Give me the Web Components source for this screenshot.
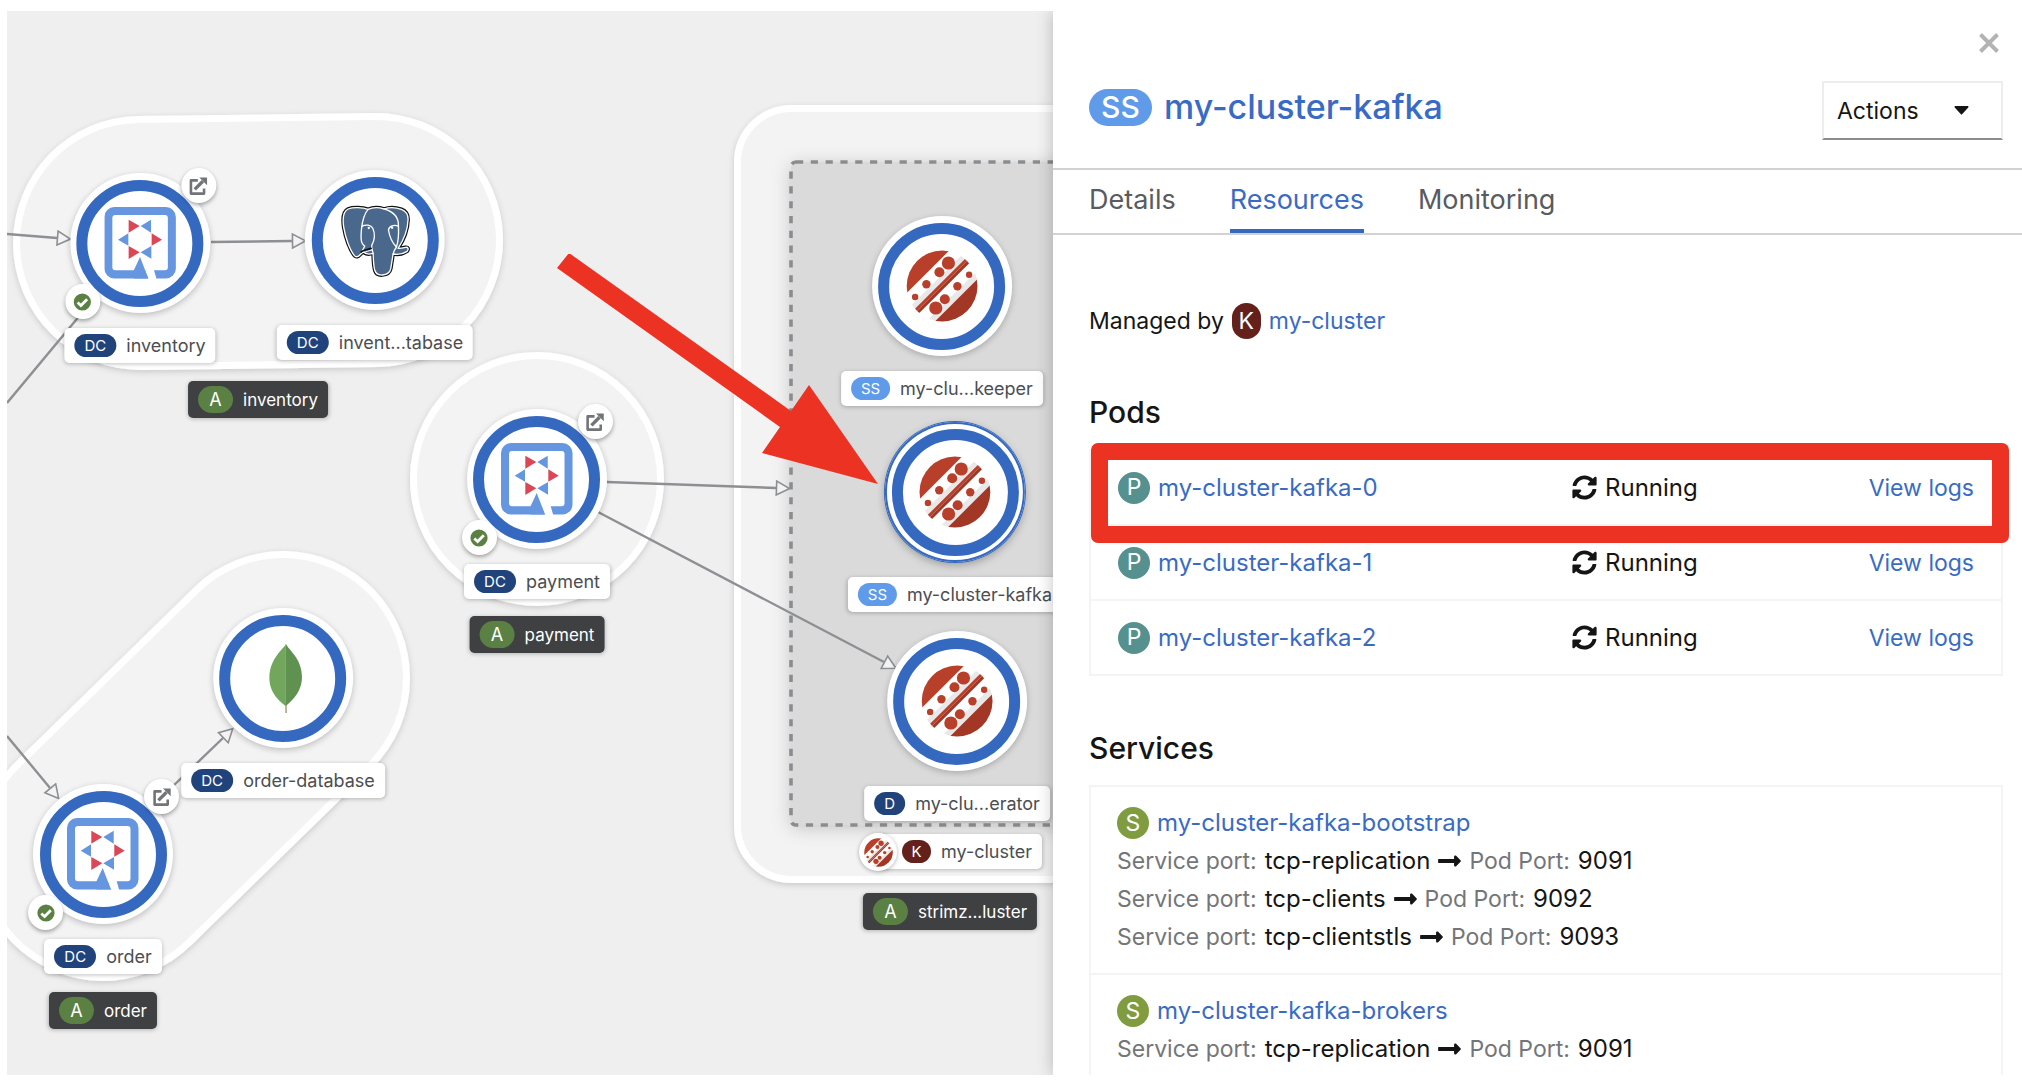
<!DOCTYPE html>
<html lang="en">
<head>
<meta charset="utf-8">
<meta name="viewport" content="width=device-width, initial-scale=1">
<title>my-cluster-kafka</title>
<style>
  html, body { margin: 0; height: 100%; }
  body { font-family: Inter, "Open Sans", sans-serif; font-size: 23px; color: #151515; background: #fff; }
</style>
</head>
<body>
<console-page></console-page>
<script>
const define = (name, html, setup) => {
  const template = document.createElement('template');
  template.innerHTML = '<style>*{box-sizing:border-box}a{color:#3a6bc4;text-decoration:none}svg{display:block;flex:none}</style>' + html;
  customElements.define(name, class extends HTMLElement {
    connectedCallback() {
      if (this.shadowRoot) return;
      const root = this.attachShadow({ mode: 'open' });
      root.append(template.content.cloneNode(true));
      if (setup) setup(this, root);
    }
  });
};

/* Artwork, drawn around a 72 x 72 box */
const ART = {
  quarkus: `<svg viewBox="0 0 72 72" width="72" height="72">
    <rect width="71.5" height="71.5" rx="10" fill="#6596df"/><rect x="8" y="8" width="55.5" height="55.3" rx="3" fill="#fff"/>
    <path d="M35.7 50 44 72H52.2L49.6 63V50Z" fill="#fff"/><path d="M35.7 50 29.5 63.3V71.5H44Z" fill="#6596df"/>
    <path fill="#db4756" d="M24.3 12.7V25.7L35.3 19ZM47.3 26.3V38.7L57.7 32.7ZM24.3 39V52L35.3 45.3Z"/>
    <path fill="#6596df" d="M46.7 12.7V25.7L36.3 19ZM24 26.3V38.7L13.7 32.7ZM47 39V51.7L36.3 45.3Z"/></svg>`,
  postgres: `<svg viewBox="119 114 216 216" width="72" height="72" overflow="visible" stroke-linejoin="round" stroke-linecap="round">
    <defs><path id="el" d="M207 130C190 124 162 123 147 129C130 137 130 160 134 185C139 215 152 252 166 269C171 275 177 272 183 266L192 257C200 266 212 265 222 262C223 285 223 300 227 313C231 325 240 328 250 327C264 326 272 322 275 308L282 264C298 267 312 264 324 256C330 249 327 243 319 244C311 246 305 248 297 247C314 222 326 190 327 160C327 146 320 135 307 130C290 124 268 124 255 129C240 124 220 124 207 130Z"/></defs>
    <use href="#el" fill="none" stroke="#111" stroke-width="11"/>
    <use href="#el" fill="#49688c" stroke="#fff" stroke-width="4"/>
    <g fill="none" stroke="#fff" stroke-width="4">
      <path d="M207 130C194 144 190 162 187 190C185 215 184 233 197 240L190 254"/>
      <path d="M188 181C200 175 216 176 221 187C229 205 225 225 218 238C216 246 220 252 222 262"/>
      <path d="M255 129C285 137 299 155 298 181C299 205 300 220 292 243"/>
      <path d="M298 181C285 175 270 180 268 192C271 210 281 232 292 243C287 250 283 256 282 264"/></g>
    <path d="M186 258C197 250 204 252 216 247" fill="none" stroke="#111" stroke-width="5"/>
    <path d="M190 260C203 257 209 254 219 252" fill="none" stroke="#fff" stroke-width="3"/>
    <circle cx="209" cy="186" r="3.5" fill="#fff"/><circle cx="279" cy="185" r="3.5" fill="#fff"/></svg>`,
  mongo: `<svg viewBox="-36 -36 72 72" width="72" height="72">
    <path d="M1.9 25H3.6L3.9 35H2Z" fill="#b9ad98"/>
    <path d="M2.7-34.5C3-31-13.8-21-13.8 0C-13.8 15-3 24 2.7 28Z" fill="#71a65c"/>
    <path d="M2.7-34.5C5-28 18.8-20 18.8-1C18.8 15 7 24 2.7 28Z" fill="#5f9150"/></svg>`,
  strimzi: `<svg viewBox="-36 -36 72 72" width="72" height="72">
    <defs><clipPath id="disc"><circle r="35.4"/></clipPath></defs>
    <g clip-path="url(#disc)"><g transform="rotate(-45)">
      <rect x="-36" y="-36" width="72" height="72" fill="#fff"/><rect x="-36" y="-36" width="72" height="16" fill="#b8402a"/>
      <rect x="-36" y="-8" width="72" height="5" fill="#e8e8e8"/><rect x="-36" y="14" width="72" height="6" fill="#e8e8e8"/>
      <rect x="-36" y="-3" width="72" height="3" fill="#b8402a"/><rect x="-36" width="72" height="3" fill="#a23726"/>
      <rect x="-36" y="20" width="72" height="16" fill="#a23726"/></g>
      <g fill="#b8402a"><circle cx="6.3" cy="-23" r="6.6"/><circle cx="-2.7" cy="-13.7" r="5"/><circle cx="-15.7" cy="-1.7" r="4.2"/><circle cx="-27" cy="11" r="3.2"/>
      <circle cx="27" cy="-11.3" r="3.2"/><circle cx="15.3" cy=".3" r="4.2"/><circle cx="2.7" cy="13.3" r="5"/><circle cx="-6.3" cy="22" r="6.6"/></g></g></svg>`,
  link: `<svg viewBox="-10 -10 20 20" width="20" height="20"><path d="M-.5-5.6H-7.4V7.6H5.7V2.4" fill="none" stroke="#737478" stroke-width="2.6" stroke-linejoin="round"/><path d="M-3.6 3.4 4.5-4.7" stroke="#737478" stroke-width="3.4"/><path d="M1-8.4H8.7V-.8Z" fill="#737478"/></svg>`,
  check: `<svg viewBox="-10 -10 20 20" width="20" height="20"><circle r="8.6" fill="#5a8044"/><path d="M-4.7.4-1.4 3.5 4.8-2.7" fill="none" stroke="#fff" stroke-width="2.8"/></svg>`
};

/* Short pill that names the kind of a resource */
define('kind-badge', `<style>
  :host{display:inline-flex;flex:none;align-items:center;justify-content:center;color:#fff;font-size:15px;font-weight:400;line-height:1;
    width:var(--w,42px);height:var(--h,23px);border-radius:16px;background:var(--c)}
  :host([kind=DC]){--c:#20437c}
  :host([kind=D]){--c:#20437c;--w:31px}
  :host([kind=SS]){--c:#5f9be8;--w:39px}
  :host([kind=K]){--c:#64201a;--w:29px}
  :host([kind=A]){--c:#5a8044;--w:35px;--h:27px;font-size:18px}
  :host([kind=P]){--c:#56908f}
  :host([kind=S]){--c:#809c40}
  :host([kind=P]),:host([kind=S]){--w:32px;--h:32px;font-size:23px}
  :host([large][kind=K]){--w:29px;--h:36px;font-size:23px}
  :host([large][kind=SS]){--w:63px;--h:37px;border-radius:19px;font-size:30px;font-weight:500}
</style><span></span>`, (host, root) => { root.querySelector('span').textContent = host.getAttribute('kind'); });

define('node-label', `<style>
  :host{display:inline-flex;align-items:center;gap:10px;height:35px;padding:0 10px;border-radius:5px;background:#fff;color:#4b4e52;
    font-size:18px;line-height:20px;white-space:nowrap;box-shadow:0 1px 4px rgba(0,0,0,.25)}
  :host([group]){height:37px;background:#3f4042;color:#fff;font-size:17px}
  :host([icon]){position:relative;padding-left:24px}
  .lead{display:none;position:absolute;left:-19px;width:38px;height:38px;border-radius:50%;background:#fff;box-shadow:0 1px 4px rgba(0,0,0,.3)}
  .lead svg{width:29px;height:29px;margin:5px}
  :host([icon]) .lead{display:block}
</style><span class="lead"></span><slot></slot>`, (host, root) => {
  const badge = document.createElement('kind-badge');
  badge.setAttribute('kind', host.getAttribute('kind'));
  root.querySelector('slot').before(badge);
  if (host.hasAttribute('icon')) root.querySelector('.lead').innerHTML = ART[host.getAttribute('icon')];
});

define('topology-node', `<style>
  :host{position:absolute;display:flex;flex-direction:column;align-items:center;gap:15px;transform:translate(-50%,-70px)}
  .disc{position:relative;width:140px;height:140px;border-radius:50%;background:#fff;box-shadow:0 2px 6px rgba(0,0,0,.22);display:grid;place-items:center}
  .ring{width:127px;height:127px;border-radius:50%;border:11px solid #3569c0;display:grid;place-items:center}
  :host([selected]) .disc{box-shadow:0 0 0 1px #3569c0,inset 0 0 0 2px #3569c0,0 3px 8px rgba(0,0,0,.3)}
  .deco{display:none;position:absolute;width:35px;height:35px;padding:0;border:0;border-radius:50%;background:#fff;place-items:center;box-shadow:0 2px 4px rgba(0,0,0,.35)}
  .open{left:111px;top:-5px}.ok{left:-5px;top:111px}
  :host([app]) .deco{display:grid}
</style><div class="disc"><div class="ring"></div><a class="deco open" href="#" aria-label="Open URL">${ART.link}</a><span class="deco ok">${ART.check}</span></div><slot></slot>`,
(host, root) => {
  root.querySelector('.ring').innerHTML = ART[host.getAttribute('icon')];
  host.style.left = host.getAttribute('x') + 'px';
  host.style.top = host.getAttribute('y') + 'px';
});

define('group-label', `<style>:host{position:absolute;display:flex;transform:translateX(-50%)}</style><slot></slot>`, host => {
  host.style.left = host.getAttribute('x') + 'px';
  host.style.top = host.getAttribute('y') + 'px';
});

define('topology-view', `<style>
  :host{display:block;position:relative;overflow:hidden;background:#efefef}
  .map{position:absolute;inset:0;width:100%;height:100%}
</style>
<svg class="map" aria-hidden="true">
  <defs>
    <filter id="soft" filterUnits="userSpaceOnUse" x="-200" y="-50" width="1500" height="1200"><feDropShadow dx="0" dy="2" stdDeviation="3" flood-opacity=".16"/></filter>
    <filter id="deep" filterUnits="userSpaceOnUse" x="700" y="50" width="600" height="900"><feDropShadow dx="0" dy="3" stdDeviation="9" flood-opacity=".2"/></filter>
    <marker id="tip" viewBox="0 0 16 17" markerWidth="16" markerHeight="17" markerUnits="userSpaceOnUse" refX="1" refY="8.5" orient="auto"><path d="M1.5 1.5V15.5L14.5 8.5Z" fill="#f3f3f3" stroke="#8d8f93" stroke-width="1.6"/></marker>
  </defs>
  <g stroke-linecap="round" fill="none">
    <g filter="url(#soft)"><path d="M133 232 369 229" stroke="#fff" stroke-width="254"/></g><path d="M133 232 369 229" stroke="#f3f3f3" stroke-width="240"/>
    <g filter="url(#soft)"><path d="M96 843 276 667" stroke="#fff" stroke-width="254"/></g><path d="M96 843 276 667" stroke="#f3f3f3" stroke-width="240"/>
  </g>
  <circle cx="530" cy="468" r="123.500" fill="#f3f3f3" stroke="#fff" stroke-width="7" filter="url(#soft)"/>
  <rect x="730.500" y="97.500" width="480" height="771" rx="54" fill="#f3f3f3" stroke="#fff" stroke-width="7" filter="url(#soft)"/>
  <rect x="784" y="151" width="380" height="663" rx="5" fill="#dadada" filter="url(#deep)"/>
  <rect x="784" y="151" width="380" height="663" rx="5" fill="none" stroke="#8a8d90" stroke-width="3.600" stroke-dasharray="7.200 7.600"/>
  <g stroke="#8d8f93" stroke-width="2.400">
    <path d="M0 223 50 227" marker-end="url(#tip)"/><path d="M204 231 285 230" marker-end="url(#tip)"/>
    <path d="M0 392 74 303"/>
    <path d="M600 471 769 477" marker-end="url(#tip)"/><path d="M591 501 877 651" marker-end="url(#tip)"/>
    <path d="M0 725 43 777" marker-end="url(#tip)"/><path d="M163 778 216 727" marker-end="url(#tip)"/>
  </g>
</svg>
<slot></slot>`);

define('call-out-arrow', `<style>:host{position:absolute;left:550px;top:243px;pointer-events:none}</style>
<svg width="323" height="232" viewBox="550 243 323 232" aria-hidden="true"><path fill="#ec3323" d="M562 242 784 400 802 374 871 473 755 442 773 416 550 257Z"/></svg>`);

define('panel-header', `<style>
  :host{display:block;border-bottom:2px solid #d2d2d2;padding:0 19px 28px 36px}
  .top{display:flex;justify-content:flex-end;height:64px;align-items:center}
  .close{width:28px;height:28px;padding:4px;border:0;background:none}
  .row{display:flex;justify-content:space-between;align-items:flex-start;margin-top:6px}
  h1{display:flex;align-items:center;gap:12px;margin:0;font-size:34px;line-height:52px;font-weight:500}
  .act{display:flex;align-items:center;justify-content:space-between;width:181px;height:59px;padding:0 32px 0 13px;background:#fff;font:inherit;color:inherit;
    border:2px solid #ededed;border-bottom-color:#8a8d90}
</style>
<div class="top"><button class="close" aria-label="Close"><svg width="20" height="20" viewBox="0 0 20 20"><path d="M1.500 1.500 18.500 18.500M18.500 1.500 1.500 18.500" stroke="#b3b3b3" stroke-width="4"/></svg></button></div>
<div class="row"><h1><kind-badge kind="SS" large></kind-badge><a href="#">my-cluster-kafka</a></h1>
<button class="act" aria-haspopup="true">Actions<svg width="15" height="9" viewBox="0 0 15 9"><path d="M1 0H14Q15 .5 14.300 1.500L8.300 8Q7.500 9 6.700 8L.7 1.500Q0 .5 1 0Z" fill="#151515"/></svg></button></div>`);

define('panel-tabs', `<style>
  :host{display:block;border-bottom:2px solid #d2d2d2}
  nav{display:flex;gap:54px;padding:0 36px}
  a{padding-bottom:3px;font-size:27px;line-height:60px;color:#585b60}
  a[aria-current]{color:#3a6bc4;box-shadow:inset 0 -4px #3569c0}
</style><nav aria-label="Sections"><a href="#">Details</a><a href="#" aria-current="page">Resources</a><a href="#">Monitoring</a></nav>`);

define('panel-section', `<style>
  :host{display:block;margin-top:53px}
  h2{margin:0 0 18px;font-size:30px;line-height:38px;font-weight:500}
</style><h2></h2><slot></slot>`, (host, root) => { root.querySelector('h2').textContent = host.getAttribute('heading'); });

define('pod-table', `<style>
  :host{display:block;position:relative}
  table{width:100%;border-collapse:collapse;border:2px solid #f4f4f4;table-layout:fixed}
  tr{border-bottom:2px solid #f4f4f4;height:75px}
  td{padding:0 27px}
  td:first-child{width:50%}
  td:nth-child(2){padding-left:26px}
  td:last-child{text-align:right}
  .cell{display:flex;align-items:center;gap:8px;font-size:24px}
  .mark{position:absolute;inset:-6px -6px auto 2px;height:100px;border:17px solid #ec3323;border-radius:7px;pointer-events:none}
</style><table aria-label="Pods"><tbody></tbody></table><span class="mark"></span>`, (host, root) => {
  root.querySelector('tbody').innerHTML = [0, 1, 2].map(n => `<tr>
    <td><span class="cell"><kind-badge kind="P"></kind-badge><a href="#">my-cluster-kafka-${n}</a></span></td>
    <td><span class="cell"><svg width="25" height="25" viewBox="0 0 512 512"><path fill="#151515" d="M370.720 133.280C339.458 104.008 298.888 87.962 255.848 88c-77.458.068-144.328 53.178-162.791 126.850-1.344 5.363-6.122 9.150-11.651 9.150H24.103c-7.498 0-13.194-6.807-11.807-14.176C33.933 94.924 134.813 8 256 8c66.448 0 126.791 26.136 171.315 68.685L463.030 40.970C478.149 25.851 504 36.559 504 57.941V192c0 13.255-10.745 24-24 24H345.941c-21.382 0-32.090-25.851-16.971-40.971l41.750-41.749zM32 296h134.059c21.382 0 32.090 25.851 16.971 40.971l-41.750 41.750c31.262 29.273 71.835 45.319 114.876 45.280 77.418-.070 144.315-53.144 162.787-126.849 1.344-5.363 6.122-9.150 11.651-9.150h57.304c7.498 0 13.194 6.807 11.807 14.176C478.067 417.076 377.187 504 256 504c-66.448 0-126.791-26.136-171.315-68.685L48.970 471.030C33.851 486.149 8 475.441 8 454.059V320c0-13.255 10.745-24 24-24z"/></svg>Running</span></td>
    <td><a href="#">View logs</a></td></tr>`).join('');
});

define('service-list', `<style>
  ul{list-style:none;margin:0;padding:0;border:2px solid #f4f4f4}
  li{padding:17px 26px;line-height:38px}
  li+li{border-top:2px solid #f4f4f4}
  .name{display:flex;align-items:center;gap:8px;height:38px;font-size:24px}
  .port{display:flex;align-items:center;gap:8px;height:38px;white-space:nowrap;font-size:24px}
  .k{color:#737679;font-size:23px}
</style><ul></ul>`, (host, root) => {
  const port = ([name, number]) => `<div class="port"><span class="k">Service port:</span><span>${name}</span>
    <svg width="23" height="26" viewBox="0 0 448 512"><path fill="#151515" d="M313.941 216H12c-6.627 0-12 5.373-12 12v56c0 6.627 5.373 12 12 12h301.941v46.059c0 21.382 25.851 32.090 40.971 16.971l86.059-86.059c9.373-9.373 9.373-24.569 0-33.941l-86.059-86.059c-15.119-15.119-40.971-4.411-40.971 16.971V216z"/></svg>
    <span class="k">Pod Port:</span><span>${number}</span></div>`;
  const services = [
    ['my-cluster-kafka-bootstrap', [['tcp-replication', 9091], ['tcp-clients', 9092], ['tcp-clientstls', 9093]]],
    ['my-cluster-kafka-brokers', [['tcp-replication', 9091]]]
  ];
  root.querySelector('ul').innerHTML = services.map(([name, ports]) =>
    `<li><div class="name"><kind-badge kind="S"></kind-badge><a href="#">${name}</a></div>${ports.map(port).join('')}</li>`).join('');
});

define('side-panel', `<style>
  :host{display:block;position:relative;overflow:hidden;background:#fff}
  .body{padding:0 19px 60px 36px}
  .owner{display:flex;align-items:center;gap:8px;height:38px;margin-top:67px}
</style>
<panel-header></panel-header><panel-tabs></panel-tabs>
<div class="body">
  <div class="owner">Managed by<kind-badge kind="K" large></kind-badge><a href="#">my-cluster</a></div>
  <panel-section heading="Pods"><pod-table></pod-table></panel-section>
  <panel-section heading="Services"><service-list></service-list></panel-section>
</div>`);

define('console-page', `<style>
  :host{display:grid;grid-template-columns:1046fr 969fr;grid-template-rows:minmax(0,1fr);height:100%;padding:11px 0 17px 7px;box-sizing:border-box}
  .aside{display:grid;min-height:0;position:relative;box-shadow:0 0 16px rgba(0,0,0,.24);clip-path:inset(0 0 0 -30px)}
  side-panel{min-height:0}
</style>
<topology-view>
  <topology-node icon="quarkus" app x="133" y="232"><node-label kind="DC">inventory</node-label></topology-node>
  <topology-node icon="postgres" x="368" y="229"><node-label kind="DC">invent...tabase</node-label></topology-node>
  <topology-node icon="quarkus" app x="530" y="468"><node-label kind="DC">payment</node-label></topology-node>
  <topology-node icon="mongo" x="276" y="667"><node-label kind="DC">order-database</node-label></topology-node>
  <topology-node icon="quarkus" app x="96" y="843"><node-label kind="DC">order</node-label></topology-node>
  <topology-node icon="strimzi" x="935" y="275"><node-label kind="SS">my-clu...keeper</node-label></topology-node>
  <topology-node icon="strimzi" selected x="948" y="481"><node-label kind="SS">my-cluster-kafka</node-label></topology-node>
  <topology-node icon="strimzi" x="950" y="690"><node-label kind="D">my-clu...erator</node-label></topology-node>
  <group-label x="953" y="823"><node-label kind="K" icon="strimzi">my-cluster</node-label></group-label>
  <group-label x="251" y="370"><node-label kind="A" group>inventory</node-label></group-label>
  <group-label x="530" y="605"><node-label kind="A" group>payment</node-label></group-label>
  <group-label x="96" y="981"><node-label kind="A" group>order</node-label></group-label>
  <group-label x="943" y="882"><node-label kind="A" group>strimz...luster</node-label></group-label>
  <call-out-arrow></call-out-arrow>
</topology-view>
<div class="aside"><side-panel></side-panel></div>`);
</script>
</body>
</html>
